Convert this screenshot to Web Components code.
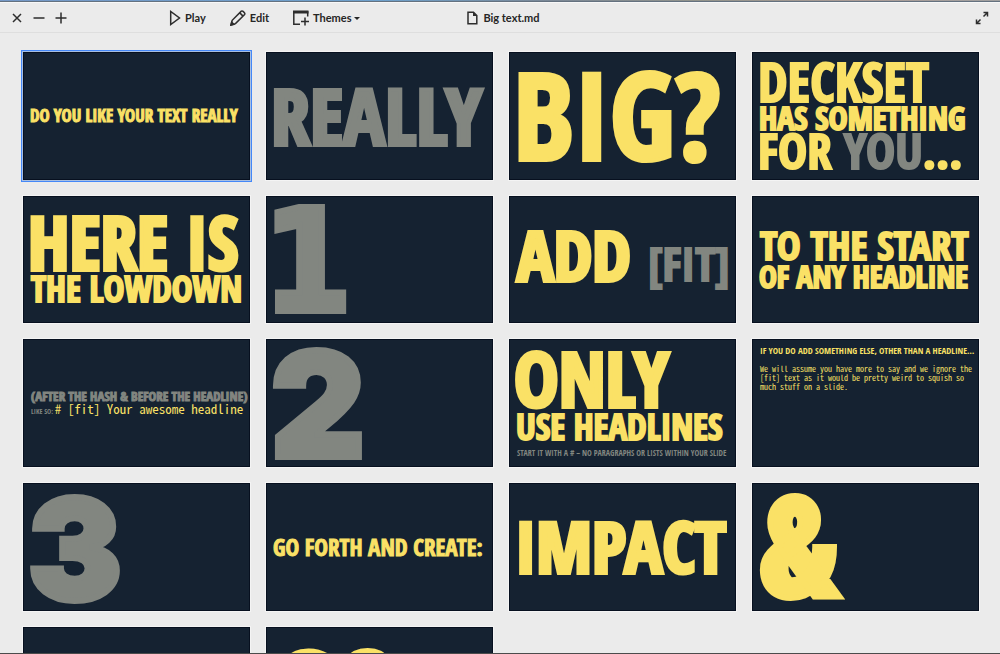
<!DOCTYPE html>
<html lang="en">
<head>
<meta charset="utf-8">
<title>Big text.md</title>
<style>
  body { margin: 0; background: #ebebeb; font-family: Lato, "Open Sans", sans-serif; color: #262626; }
</style>
</head>
<body>
<deck-window>
  <tool-bar slot="toolbar"></tool-bar>
  <deck-slide selected><fit-line size="17" lead="24">DO YOU LIKE YOUR TEXT REALLY</fit-line></deck-slide>
  <deck-slide><fit-line size="78" lead="112" tone="muted">REALLY</fit-line></deck-slide>
  <deck-slide><fit-line size="120" lead="120">BIG?</fit-line></deck-slide>
  <deck-slide><fit-line size="53" lead="42">DECKSET</fit-line><fit-line size="32" lead="28">HAS SOMETHING</fit-line><fit-line size="49" lead="38">FOR <fit-tone>YOU</fit-tone>…</fit-line></deck-slide>
  <deck-slide><fit-line size="73" lead="60">HERE IS</fit-line><fit-line size="35" lead="34">THE LOWDOWN</fit-line></deck-slide>
  <deck-slide><fit-line size="142" lead="120" tone="muted" face="slab">1</fit-line></deck-slide>
  <deck-slide><fit-line size="69" lead="70">ADD <fit-tone size="46">[FIT]</fit-tone></fit-line></deck-slide>
  <deck-slide><fit-line size="40" lead="34">TO THE START</fit-line><fit-line size="30" lead="28">OF ANY HEADLINE</fit-line></deck-slide>
  <deck-slide><fit-line size="13" lead="16" tone="muted">(AFTER THE HASH &amp; BEFORE THE HEADLINE)</fit-line><fit-line size="7" lead="14" tone="muted">LIKE SO: <code-text size="13">#&nbsp;[fit] Your awesome headline</code-text></fit-line></deck-slide>
  <deck-slide><fit-line size="145" lead="120" tone="muted" face="wide">2</fit-line></deck-slide>
  <deck-slide><fit-line size="75" lead="68">ONLY</fit-line><fit-line size="35" lead="30">USE HEADLINES</fit-line><fit-line size="8" lead="19" tone="muted">START IT WITH A # – NO PARAGRAPHS OR LISTS WITHIN YOUR SLIDE</fit-line></deck-slide>
  <deck-slide top><fit-line size="9" lead="23">IF YOU DO ADD SOMETHING ELSE, OTHER THAN A HEADLINE…</fit-line><code-text block size="8">We will assume you have more to say and we ignore the [fit] text as it would be pretty weird to squish so much stuff on a slide.</code-text></deck-slide>
  <deck-slide><fit-line size="140" lead="120" tone="muted" face="wide">3</fit-line></deck-slide>
  <deck-slide><fit-line size="23" lead="30">GO FORTH AND CREATE:</fit-line></deck-slide>
  <deck-slide><fit-line size="71" lead="70">IMPACT</fit-line></deck-slide>
  <deck-slide><fit-line size="140" lead="120" face="heavy">&amp;</fit-line></deck-slide>
  <deck-slide></deck-slide>
  <deck-slide><fit-line size="116" lead="120">GO</fit-line></deck-slide>
</deck-window>

<script>
class DeckWindow extends HTMLElement {
  constructor() {
    super();
    this.attachShadow({ mode: 'open' }).innerHTML = `
      <style>
        :host { display: flex; flex-direction: column; height: 100vh; box-sizing: border-box; border-bottom: 1px solid #4b4b4b; overflow: hidden; }
        .edge { flex: none; height: 1px; border-bottom: 1px solid #64717f; background: linear-gradient(90deg, #7598c6, #6da0cb 38%, #7b8896 55%, #92938b 70%, #ab9c96 86%, #a0a0a0); }
        main { flex: 1; min-height: 0; overflow: hidden; display: grid; grid-template-columns: repeat(4, minmax(0, 1fr)); align-content: start; gap: 16px; padding: 19px 21px 20px 23px; }
      </style>
      <div class="edge"></div>
      <slot name="toolbar"></slot>
      <main><slot></slot></main>`;
  }
}

class ToolBar extends HTMLElement {
  constructor() {
    super();
    this.attachShadow({ mode: 'open' }).innerHTML = `
      <style>
        :host { display: block; flex: none; border-top: 1px solid #f8f8f8; border-bottom: 1px solid #dedede; background: #ebebeb; }
        header { display: grid; grid-template-columns: 1fr auto 1fr; align-items: center; height: 29px; padding: 0 4px 0 11px; }
        .left, .controls, .actions { display: flex; align-items: center; }
        .controls { gap: 10px; }
        .actions { gap: 24px; margin-left: 102px; }
        button { all: unset; display: flex; align-items: center; gap: 4px; cursor: pointer; font: 700 11px/16px Lato, "Open Sans", sans-serif; color: #262626; }
        h1 { display: flex; align-items: center; gap: 5px; margin: 0; font: 700 11px/16px Lato, "Open Sans", sans-serif; }
        .right { justify-self: end; margin-right: 7px; }
        svg { display: block; fill: none; stroke: #2d2d2d; stroke-width: 1.5; }
        .caret { width: 6px; height: 8px; fill: #262626; stroke: none; margin-left: -2px; }
      </style>
      <header>
        <div class="left">
          <div class="controls">
            <button aria-label="Close"><svg width="12" height="12"><path d="M2 2l8 8M10 2l-8 8"/></svg></button>
            <button aria-label="Minimise"><svg width="12" height="12"><path d="M0.500 6h11"/></svg></button>
            <button aria-label="Zoom"><svg width="12" height="12"><path d="M0.500 6h11M6 0.500v11"/></svg></button>
          </div>
          <div class="actions">
            <button><svg width="12" height="16"><path d="M1.700 1.500v13L10.500 8z"/></svg>Play</button>
            <button><svg width="16" height="16"><path d="M1 15l1.200-4.700L11.300 1.200q.9-.6 1.800.2l1.300 1.300q.8.900.2 1.800L5.500 13.600zM9.800 2.900l3.200 3.200"/><path d="M1 15l.7-2.800 2.100 2.100z" fill="#2d2d2d"/></svg>Edit</button>
            <button aria-haspopup="menu"><svg width="16" height="16"><path d="M7 14.200H.8V2h13.900v4.500"/><path d="M0 2h15.500" stroke-width="3"/><path d="M8 11.500h8M12 7.500v8"/></svg>Themes<svg class="caret"><path d="M0 3h6L3 6z"/></svg></button>
          </div>
        </div>
        <h1><svg width="11" height="14"><path d="M1 1.200h5.500L9.800 4.500v8.300H1z"/><path d="M6 1v4h4z" fill="#2d2d2d" stroke="none"/></svg>Big text.md</h1>
        <button class="right" aria-label="Full screen"><svg width="14" height="14"><path d="M8.500 5.500L12 2M8.500 1.500h4v4M5.500 8.500L2 12M1.500 8.500v4h4"/></svg></button>
      </header>`;
  }
}

class DeckSlide extends HTMLElement {
  constructor() {
    super();
    this.attachShadow({ mode: 'open' }).innerHTML = `
      <style>
        :host { display: block; aspect-ratio: 16 / 9; min-width: 0; background: #152231; box-shadow: inset 0 0 0 1px #07101f, 0 0 0 1px #f4f4f4; }
        :host([selected]) { box-shadow: inset 0 0 0 1px #07101f, 0 0 0 1px #a9bfe0, 0 0 0 2px #4488f8; }
        article { box-sizing: border-box; height: 100%; padding: 0 8px; overflow: hidden; display: flex; flex-direction: column; justify-content: center; }
        :host([top]) article { justify-content: flex-start; }
      </style>
      <article><slot></slot></article>`;
  }
}

/* Typefaces of a headline: family, optical margin (em) that brings the first letter to the slide's inner edge, and weight of the outline. */
const FACES = {
  normal: { family: '"Open Sans Condensed", "Roboto Condensed", Roboto', indent: -0.035 },
  heavy: { family: '"Roboto Condensed", Roboto', indent: -0.01, stroke: 6 },
  wide: { family: 'Inter', indent: -0.02, stroke: 6 },
  slab: { family: '"DejaVu Sans Condensed", "DejaVu Sans"', indent: -0.08, stroke: 6 }
};

class FitLine extends HTMLElement {
  constructor() {
    super();
    const size = +this.getAttribute('size');
    const lead = +this.getAttribute('lead');
    const face = FACES[this.getAttribute('face') || 'normal'];
    const stroke = face.stroke || (size < 13 ? 0 : size < 28 ? 1 : size < 60 ? 2 : 4);
    /* A and T reach their own left edge and need no optical margin. */
    const indent = /^[AT]/.test(this.textContent) ? 0 : Math.round(size * face.indent);
    const raise = face.stroke ? 0 : Math.round(size * 0.015);
    this.attachShadow({ mode: 'open' }).innerHTML = `
      <style>
        :host { display: block; flex: none; color: #fae166; white-space: nowrap; }
        :host([tone="muted"]) { color: #828680; }
        h2 { margin: 0 0 0 ${indent}px; padding: ${face.stroke ? 4 : 0}px 0 ${raise * 2}px; font: 900 ${size}px/${lead - raise * 2}px ${face.family}, sans-serif; -webkit-text-stroke: ${stroke}px currentColor; }
      </style>
      <h2><slot></slot></h2>`;
  }
}

class FitTone extends HTMLElement {
  constructor() {
    super();
    const size = this.getAttribute('size');
    this.attachShadow({ mode: 'open' }).innerHTML = `
      <style>:host { color: #828680; -webkit-text-stroke-color: #828680; ${size ? `font-size: ${size}px; -webkit-text-stroke-width: 2px;` : ''} }</style><slot></slot>`;
  }
}

class CodeText extends HTMLElement {
  constructor() {
    super();
    this.attachShadow({ mode: 'open' }).innerHTML = `
      <style>
        :host { color: #fae166; font: 400 ${this.getAttribute('size')}px/9px "Noto Sans Mono CJK SC", "DejaVu Sans Mono", monospace; }
        :host([block]) { display: block; margin: 2px -4px 0 0; white-space: normal; }
        code { font: inherit; }
      </style>
      <code><slot></slot></code>`;
  }
}

customElements.define('fit-tone', FitTone);
customElements.define('code-text', CodeText);
customElements.define('fit-line', FitLine);
customElements.define('deck-slide', DeckSlide);
customElements.define('tool-bar', ToolBar);
customElements.define('deck-window', DeckWindow);
</script>
</body>
</html>
